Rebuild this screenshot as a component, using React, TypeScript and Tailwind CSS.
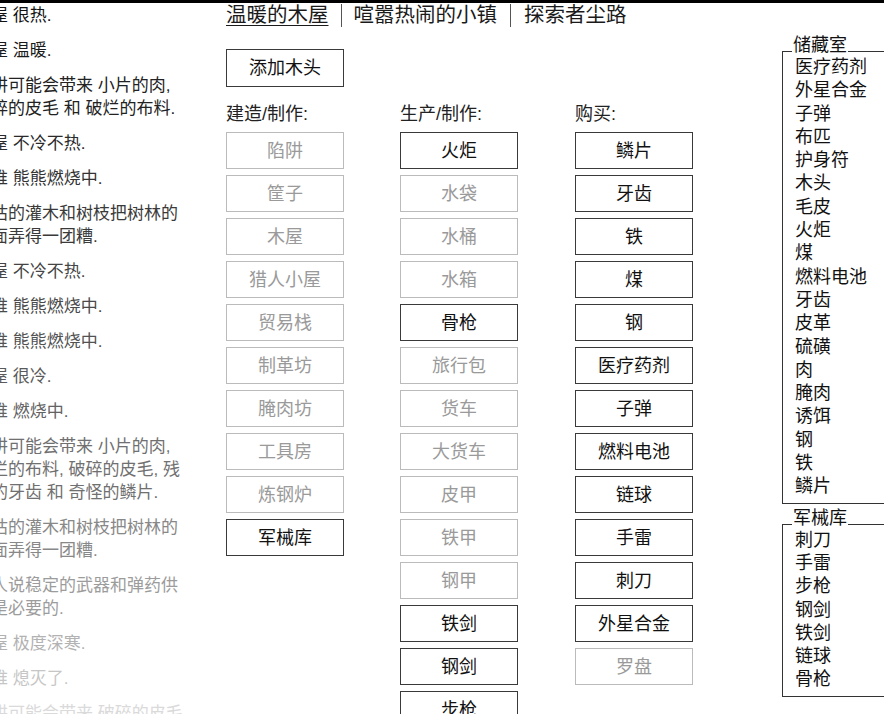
import React from "react";

type Note = { lines: string[]; color: string };
type Btn = { label: string; off?: boolean };

const notes: Note[] = [
  { lines: ["木屋 很热."], color: "text-[#111]" },
  { lines: ["木屋 温暖."], color: "text-[#1a1a1a]" },
  { lines: ["陷阱可能会带来 小片的肉,", "破碎的皮毛 和 破烂的布料."], color: "text-[#222]" },
  { lines: ["木屋 不冷不热."], color: "text-[#2a2a2a]" },
  { lines: ["火堆 熊熊燃烧中."], color: "text-[#333]" },
  { lines: ["干枯的灌木和树枝把树林的", "地面弄得一团糟."], color: "text-[#3a3a3a]" },
  { lines: ["木屋 不冷不热."], color: "text-[#444]" },
  { lines: ["火堆 熊熊燃烧中."], color: "text-[#4a4a4a]" },
  { lines: ["火堆 熊熊燃烧中."], color: "text-[#525252]" },
  { lines: ["木屋 很冷."], color: "text-[#5a5a5a]" },
  { lines: ["火堆 燃烧中."], color: "text-[#636363]" },
  {
    lines: ["陷阱可能会带来 小片的肉,", "破烂的布料, 破碎的皮毛, 残", "缺的牙齿 和 奇怪的鳞片."],
    color: "text-[#707070]",
  },
  { lines: ["干枯的灌木和树枝把树林的", "地面弄得一团糟."], color: "text-[#888]" },
  { lines: ["工人说稳定的武器和弹药供", "应是必要的."], color: "text-[#9c9c9c]" },
  { lines: ["木屋 极度深寒."], color: "text-[#b2b2b2]" },
  { lines: ["火堆 熄灭了."], color: "text-[#c6c6c6]" },
  { lines: ["陷阱可能会带来 破碎的皮毛", "和 小片的肉."], color: "text-[#dadada]" },
];

const build: Btn[] = [
  { label: "陷阱", off: true },
  { label: "筐子", off: true },
  { label: "木屋", off: true },
  { label: "猎人小屋", off: true },
  { label: "贸易栈", off: true },
  { label: "制革坊", off: true },
  { label: "腌肉坊", off: true },
  { label: "工具房", off: true },
  { label: "炼钢炉", off: true },
  { label: "军械库" },
];

const craft: Btn[] = [
  { label: "火炬" },
  { label: "水袋", off: true },
  { label: "水桶", off: true },
  { label: "水箱", off: true },
  { label: "骨枪" },
  { label: "旅行包", off: true },
  { label: "货车", off: true },
  { label: "大货车", off: true },
  { label: "皮甲", off: true },
  { label: "铁甲", off: true },
  { label: "钢甲", off: true },
  { label: "铁剑" },
  { label: "钢剑" },
  { label: "步枪" },
];

const buy: Btn[] = [
  { label: "鳞片" },
  { label: "牙齿" },
  { label: "铁" },
  { label: "煤" },
  { label: "钢" },
  { label: "医疗药剂" },
  { label: "子弹" },
  { label: "燃料电池" },
  { label: "链球" },
  { label: "手雷" },
  { label: "刺刀" },
  { label: "外星合金" },
  { label: "罗盘", off: true },
];

const stores = [
  "医疗药剂", "外星合金", "子弹", "布匹", "护身符", "木头", "毛皮", "火炬", "煤", "燃料电池",
  "牙齿", "皮革", "硫磺", "肉", "腌肉", "诱饵", "钢", "铁", "鳞片",
];

const weapons = ["刺刀", "手雷", "步枪", "钢剑", "铁剑", "链球", "骨枪"];

const Button: React.FC<Btn & { wide?: boolean }> = ({ label, off }) => (
  <div
    className={
      "w-[118px] h-[37px] flex items-center justify-center border text-[18px] leading-none " +
      (off ? "border-[#bbb] text-[#9a9a9a]" : "border-[#3a3a3a] text-[#111]")
    }
  >
    {label}
  </div>
);

const Column: React.FC<{ title: string; items: Btn[] }> = ({ title, items }) => (
  <div className="flex flex-col">
    <div className="text-[18px] leading-[22px] text-[#222]">{title}</div>
    <div className="mt-[7px] flex flex-col gap-[6px]">
      {items.map((b) => (
        <Button key={b.label} {...b} />
      ))}
    </div>
  </div>
);

const StoreBox: React.FC<{ title: string; items: string[]; className?: string }> = ({
  title,
  items,
  className,
}) => (
  <div className={"relative w-[170px] border border-[#333] pt-[4px] pb-[4px] pl-[12px] " + (className ?? "")}>
    <div className="absolute left-[9px] -top-[18px] bg-white px-px text-[18px] leading-[23px] text-[#111]">
      {title}
    </div>
    {items.map((it) => (
      <div key={it} className="text-[18px] leading-[23.3px] text-[#111] whitespace-nowrap">
        {it}
      </div>
    ))}
  </div>
);

export default function App() {
  return (
    <div className="w-[884px] h-[714px] overflow-hidden bg-white border-t-[3px] border-black flex font-['Liberation_Sans','Noto_Sans_CJK_SC',sans-serif]">
      {/* notifications */}
      <div className="-ml-[26px] w-[215px] shrink-0 pt-px text-[17px] leading-[23px]">
        {notes.map((n, i) => (
          <div key={i} className={"mb-[12px] " + n.color}>
            {n.lines.map((l, j) => (
              <div key={j} className="whitespace-nowrap">
                {l}
              </div>
            ))}
          </div>
        ))}
      </div>

      {/* main */}
      <div className="ml-[37px] w-[524px] shrink-0">
        <div className="h-[24px] flex items-center text-[20.5px] leading-[24px] text-[#1a1a1a] whitespace-nowrap">
          <span className="underline underline-offset-[3px] decoration-1">温暖的木屋</span>
          <span className="inline-block w-px h-[23px] bg-[#555] mx-[12px]" />
          <span>喧嚣热闹的小镇</span>
          <span className="inline-block w-px h-[23px] bg-[#555] mx-[13px]" />
          <span>探索者尘路</span>
        </div>

        <div className="mt-[22px] w-[118px] h-[38px] flex items-center justify-center border border-[#3a3a3a] text-[18px] text-[#111]">
          添加木头
        </div>

        <div className="mt-[16px] grid grid-cols-[174px_175px_175px]">
          <Column title="建造/制作:" items={build} />
          <Column title="生产/制作:" items={craft} />
          <Column title="购买:" items={buy} />
        </div>
      </div>

      {/* stores */}
      <div className="ml-[32px] mt-[48px] shrink-0">
        <StoreBox title="储藏室" items={stores} />
        <StoreBox title="军械库" items={weapons} className="mt-[20px]" />
      </div>
    </div>
  );
}
